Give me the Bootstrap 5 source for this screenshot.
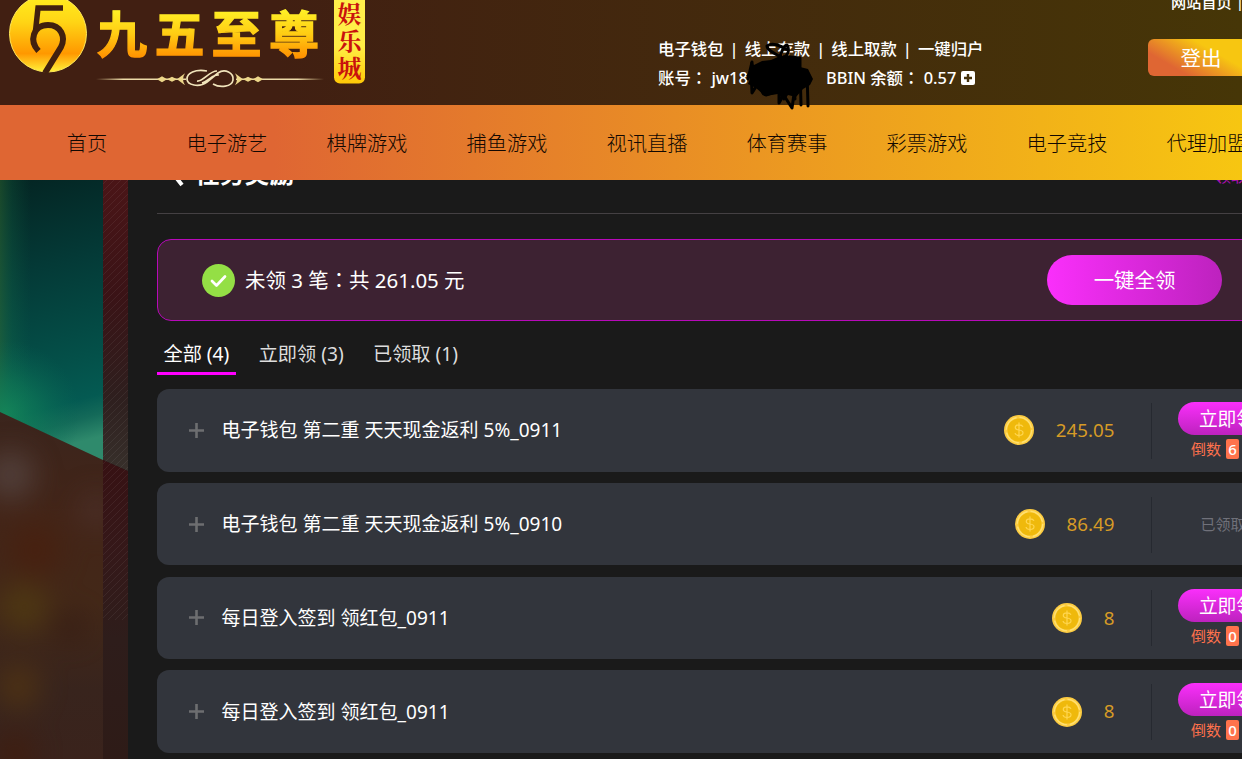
<!DOCTYPE html>
<html lang="zh-CN">
<head>
<meta charset="utf-8">
<meta name="viewport" content="width=device-width, initial-scale=1">
<title>九五至尊娱乐城</title>
<link rel="stylesheet" href="https://cdn.jsdelivr.net/npm/bootstrap@5.3.0/dist/css/bootstrap.min.css">
<style>
html,body{height:100%;overflow:hidden}
body{background:#1a1a1a;color:#fff;font-family:"Noto Sans","Noto Sans CJK SC",sans-serif;font-size:18.75px;line-height:1.4}
svg{display:block}
.colon{font-family:"Noto Sans CJK TC",sans-serif;line-height:1}
.site-head{height:105px;background:linear-gradient(90deg,#411f12 22%,#463607 100%)}
.brand{width:372px;height:105px}
.account{margin-left:286px;padding-top:35px;font-size:16.4px;width:420px;font-weight:500;white-space:nowrap}
.account>div{height:29px;line-height:27px}
.account .links{word-spacing:-1.25px}
.tools{width:164px;padding-left:93px;white-space:nowrap}
.home-links{font-size:15.2px;height:39px;line-height:20px;font-weight:500;word-spacing:-2px}
.home-links span{position:relative;top:-8px}
.logout{width:106px;height:37px;margin-left:-23px;border-radius:6px;background:linear-gradient(30deg,#df6633 24%,#f7c611 64%);font-size:20.5px;line-height:38px;text-align:center}
.scribble{left:744px;top:40px;z-index:3}
.main-nav{height:75px;padding-left:17px;z-index:2;background:linear-gradient(90deg,#df6633 22%,#f7c611 100%)}
.main-nav .nav-link{width:140px;flex:none;padding:0;text-align:center;color:#120802;font-size:20.2px;line-height:76px;font-weight:300;white-space:nowrap}
.backdrop{width:128px;flex:none}
.panel{width:1150px;flex:none;padding-left:29px;margin-top:-27px}
.panel-head{width:1120px;height:61px;border-bottom:1px solid #444043;font-size:24.8px;font-weight:700;line-height:41px}
.panel-head svg{margin:4px 10px 0 12px}
.rules{margin-left:auto;width:62px;font-size:16px;font-weight:400;color:#b00fb4;white-space:nowrap;line-height:46px}
.summary{width:1120px;height:82px;margin-top:25px;padding-left:44px;border:1px solid #b709b9;border-radius:14px;background:#3d2232;font-size:20.45px}
.claim-all{width:175px;height:50px;margin-left:auto;margin-right:54px;border-radius:25px;background:linear-gradient(90deg,#fa2ffb,#bd22be);line-height:51px;text-align:center}
.tabs{height:54px;gap:16.3px;color:#ddd;font-size:19.2px}
.tabs>div{height:54px;padding:0 6.5px;line-height:66px;white-space:nowrap}
.tabs .current{color:#fff;border-bottom:3px solid #f0f}
.tasks{gap:11.25px;margin-top:14px}
.task{width:1120px;height:82.5px;border-radius:12px;background:#32353c;flex:none}
.task .plus{margin-left:32px;margin-right:17.5px}
.task .title{width:510px;white-space:nowrap;font-size:19.03px;padding-top:1px}
.amount{width:383px;color:#d69b26;gap:21.5px}
.act{width:130px;height:56px;margin-left:36.5px;border-left:1px solid #262930;padding-left:26px;margin-top:1px}
.claim{width:98px;height:33px;border-radius:17px;background:linear-gradient(#fa2ffb,#bd22be);line-height:33px;text-align:center;margin-top:-1px}
.count{height:20px;margin-top:4px;padding-left:13px;color:#ff714c;font-size:15px;line-height:20px}
.count b{width:13px;height:20px;margin-left:5px;border-radius:2px;background:#ff734c;color:#fff;text-align:center;font-weight:500}
.done{font-size:15px;color:#70717a;line-height:55px;padding-left:22.5px}
</style>
</head>
<body>
<div class="d-flex flex-column vh-100 overflow-hidden">
<header class="site-head d-flex flex-shrink-0 position-relative">
  <svg class="brand flex-shrink-0" viewBox="0 0 372 105">
    <defs>
      <linearGradient id="gold" x1="0" y1="0" x2="0" y2="1"><stop offset="0" stop-color="#ffee20"/><stop offset=".35" stop-color="#ffd515"/><stop offset=".76" stop-color="#ff9800"/><stop offset="1" stop-color="#fff23a"/></linearGradient>
      <linearGradient id="word" gradientUnits="userSpaceOnUse" x1="0" y1="10" x2="0" y2="58"><stop offset="0" stop-color="#fff026"/><stop offset=".5" stop-color="#ffcc13"/><stop offset="1" stop-color="#ff9000"/></linearGradient>
      <linearGradient id="rule"><stop offset="0" stop-color="#e8d39a" stop-opacity="0"/><stop offset=".3" stop-color="#ecdba8"/><stop offset="1" stop-color="#ecdba8"/></linearGradient>
      <linearGradient id="ruleR" x1="1" x2="0"><stop offset="0" stop-color="#e8d39a" stop-opacity="0"/><stop offset=".3" stop-color="#ecdba8"/><stop offset="1" stop-color="#ecdba8"/></linearGradient>
      <linearGradient id="tag" x1="0" y1="0" x2="0" y2="1"><stop offset="0" stop-color="#fff04e"/><stop offset=".6" stop-color="#ffed45"/><stop offset="1" stop-color="#ffc907"/></linearGradient>
    </defs>
    <circle cx="48" cy="33.500" r="38.500" fill="url(#gold)" stroke="#ffe95a"/>
    <path d="M63 8H38L35.500 31" fill="none" stroke="#41200f" stroke-width="5.500"/>
    <path d="M38.500 51C29 41 33 25 48 25C61 25 66 37 61 47L45 73" fill="none" stroke="#41200f" stroke-width="6"/>
    <text y="53" font-family="'Noto Sans CJK SC',sans-serif" font-weight="700" font-size="50" fill="url(#word)" stroke="url(#word)" stroke-width="1.300"><tspan x="97">九</tspan><tspan x="154.500">五</tspan><tspan x="211.500">至</tspan><tspan x="269">尊</tspan></text>
    <rect x="334" y="-10" width="31" height="93.500" rx="6" fill="url(#tag)"/>
    <g font-family="'Noto Serif CJK SC','Noto Sans CJK SC',sans-serif" font-weight="700" font-size="24" fill="#c9120d"><text x="337.500" y="22.500">娱</text><text x="337.500" y="49.500">乐</text><text x="337.500" y="77">城</text></g>
    <path d="M96 78.500H186V80H96Z" fill="url(#rule)"/><path d="M236 78.500H324V80H236Z" fill="url(#ruleR)"/>
    <path d="M157 79.300l5-3 5 3-5 3zM167 79.300l5-2.500 5 2.500-5 2.500zM177 79.300l8-6q-4 6 0 12zM263 79.300l-5-3-5 3 5 3zM253 79.300l-5-2.500-5 2.500 5 2.500zM243 79.300l-8-6q4 6 0 12z" fill="#edd78a"/>
    <g fill="none" stroke="#f1e4bb" stroke-width="1.700"><path d="M207 71C195 69 187 73 187 79S199 88 207 82L218 73C225 68 234 73 233 80S220 88 213 84M197 81C203 82 209 71 217 71M202 83C210 80 213 74 219 75"/></g>
  </svg>
  <div class="account flex-shrink-0">
    <div class="links">电子钱包&nbsp; |&nbsp; 线上存款&nbsp; |&nbsp; 线上取款&nbsp; |&nbsp; 一键归户</div>
    <div class="d-flex align-items-center" style="margin-top:-1px"><span style="width:168px">账号<span class="colon" lang="zh-TW">：</span> jw18</span><span>BBIN 余额<span class="colon" lang="zh-TW">：</span> 0.57</span>
      <svg style="margin-left:5px" width="14" height="14"><rect width="14" height="14" rx="2" fill="#fff"/><path d="M7 3v8M3 7h8" stroke="#463109" stroke-width="2.400"/></svg>
    </div>
  </div>
  <div class="tools">
    <div class="home-links"><span>网站首页 &nbsp;|</span></div>
    <div class="logout">登出</div>
  </div>
  <svg class="scribble position-absolute" width="74" height="72" viewBox="744 40 74 72">
    <path d="M750 62L754 65L762 61L771 60L780 56L786 55L795 56L801 57L800 67L808 69L813 79L810 85L803 89L796 97L788 95L784 101L778 94L765 96L756 88L748 84L751 76L746 76L752 69Z"/>
    <path d="M781 57C775 54 767 50 767 46C773 42 780 46 788 50M780 57C781 54 783 45 787 45C790 50 788 56 783 58M748 79l4-17 1 14M751 70l1 23 7-11M761 86q1 9 5 9l9-3M779 82v21l8-14M783 94l9 14 2-14 0 5M794 86l1 13M796 68l4 0 1 37M807 72l1 34M793 58l7 0 0 12" fill="none" stroke="#000" stroke-width="3" stroke-linecap="round" stroke-linejoin="round"/>
  </svg>
</header>
<nav class="main-nav nav flex-nowrap flex-shrink-0 position-relative overflow-hidden">
  <a class="nav-link">首页</a><a class="nav-link">电子游艺</a><a class="nav-link">棋牌游戏</a><a class="nav-link">捕鱼游戏</a><a class="nav-link">视讯直播</a><a class="nav-link">体育赛事</a><a class="nav-link">彩票游戏</a><a class="nav-link">电子竞技</a><a class="nav-link">代理加盟</a>
</nav>
<main class="d-flex flex-nowrap" style="height:579px">
  <div class="backdrop">
    <svg width="128" height="579" viewBox="0 180 128 579">
      <defs>
        <linearGradient id="teal" x1="0" y1="0" x2=".1" y2="1"><stop offset="0" stop-color="#042422"/><stop offset=".35" stop-color="#043a37"/><stop offset=".7" stop-color="#045049"/><stop offset=".85" stop-color="#045a52"/><stop offset=".92" stop-color="#146a59"/><stop offset="1" stop-color="#2f8a6c"/></linearGradient>
        <linearGradient id="glow"><stop offset="0" stop-color="#3a7a35"/><stop offset=".12" stop-color="#1c7a4a" stop-opacity=".5"/><stop offset=".3" stop-color="#147048" stop-opacity="0"/></linearGradient>
        <radialGradient id="corner" gradientUnits="userSpaceOnUse" cx="5" cy="415" r="75"><stop offset="0" stop-color="#15885a" stop-opacity=".9"/><stop offset=".45" stop-color="#118058" stop-opacity=".5"/><stop offset="1" stop-color="#0a6a54" stop-opacity="0"/></radialGradient>
        <linearGradient id="edge" x1="0" y1="0" x2="0" y2="1"><stop offset="0" stop-color="#4a1517"/><stop offset=".4" stop-color="#3a1316"/><stop offset=".75" stop-color="#2e1f1e"/><stop offset="1" stop-color="#37302b"/></linearGradient>
        <linearGradient id="edgeLow" x1="0" y1="0" x2="0" y2="1"><stop offset="0" stop-color="#371113"/><stop offset=".3" stop-color="#351819"/><stop offset=".6" stop-color="#2e1d1b"/><stop offset="1" stop-color="#2e1b17"/></linearGradient>
        <linearGradient id="wood" x1="0" y1="0" x2="0" y2="1"><stop offset="0" stop-color="#3b251d"/><stop offset=".3" stop-color="#432518"/><stop offset=".55" stop-color="#432818"/><stop offset=".8" stop-color="#38241d"/><stop offset="1" stop-color="#3a231c"/></linearGradient>
        <pattern id="hatch" width="7" height="7" patternUnits="userSpaceOnUse"><path d="M-1 8L8-1M-1 1L1-1M6 8L8 6" stroke="#fff" stroke-opacity=".06"/></pattern>
        <filter id="soft" filterUnits="userSpaceOnUse" x="-60" y="380" width="240" height="440" color-interpolation-filters="sRGB"><feGaussianBlur stdDeviation="14"/></filter>
        <clipPath id="photo"><path d="M0 412L103 460V759H0Z"/></clipPath>
      </defs>
      <rect y="180" width="103" height="281" fill="url(#teal)"/>
      <rect y="180" width="103" height="281" fill="url(#glow)" opacity=".4"/>
      <rect y="180" width="103" height="281" fill="url(#corner)"/>
      <g clip-path="url(#photo)">
        <rect y="412" width="103" height="347" fill="url(#wood)"/>
        <g filter="url(#soft)" opacity=".85"><circle cx="10" cy="475" r="25" fill="#54433f"/><circle cx="35" cy="550" r="26" fill="#48200f"/><circle cx="24" cy="607" r="24" fill="#503a12"/><circle cx="70" cy="627" r="14" fill="#351b12"/><circle cx="18" cy="687" r="22" fill="#513413"/><circle cx="96" cy="510" r="18" fill="#4b302a"/><circle cx="15" cy="753" r="20" fill="#401d0e"/></g>
      </g>
      <path d="M103 180H128V471L103 460Z" fill="url(#edge)"/><path d="M103 460L128 471V759H103Z" fill="url(#edgeLow)"/>
      <rect x="103" y="180" width="25" height="440" fill="url(#hatch)"/>
    </svg>
  </div>
  <section class="panel">
    <div class="panel-head d-flex align-items-start">
      <svg width="16" height="32" viewBox="0 0 16 32"><path d="M12 7L4 16.500L13 28" fill="none" stroke="#fff" stroke-width="4"/></svg><span>任务奖励</span><span class="rules">领取记录</span>
    </div>
    <div class="summary d-flex align-items-center">
      <svg width="33" height="33" style="margin-right:10px"><circle cx="16.500" cy="16.500" r="16.500" fill="#94df45"/><path d="M10 17l4.500 4.500L23 12.500" fill="none" stroke="#fff" stroke-width="2.700" stroke-linecap="round" stroke-linejoin="round"/></svg>
      <span>未领 3 笔<span class="colon" lang="zh-TW">：</span>共 261.05 元</span>
      <div class="claim-all">一键全领</div>
    </div>
    <div class="tabs d-flex"><div class="current">全部 (4)</div><div>立即领 (3)</div><div>已领取 (1)</div></div>
    <div class="tasks d-flex flex-column" id="tasks"></div>
  </section>
</main>
</div>
<script src="https://cdn.jsdelivr.net/npm/bootstrap@5.3.0/dist/js/bootstrap.bundle.min.js"></script>
<script>
const tasks=[
  ['电子钱包 第二重 天天现金返利 5%_0911','245.05','6'],
  ['电子钱包 第二重 天天现金返利 5%_0910','86.49',null],
  ['每日登入签到 领红包_0911','8','0'],
  ['每日登入签到 领红包_0911','8','0']
];
document.getElementById('tasks').innerHTML=tasks.map(([title,sum,left])=>`
<div class="task d-flex align-items-center">
  <svg class="plus flex-shrink-0" width="15" height="15"><path d="M7.500 0v15M0 7.500h15" stroke="#6d6e70" stroke-width="2.600"/></svg>
  <span class="title flex-shrink-0">${title}</span>
  <div class="amount d-flex flex-shrink-0 align-items-center justify-content-end">
    <svg width="30" height="30" viewBox="0 0 30 30"><circle cx="15" cy="15" r="15" fill="#fccb40"/><circle cx="15" cy="15" r="12.700" fill="none" stroke="#ffe06f" stroke-width="1.500" stroke-dasharray="17 3"/><circle cx="15" cy="15" r="11.500" fill="#efb90c"/><path d="M19 11.800Q18 9.800 15 9.800Q11.300 9.800 11.300 12.400Q11.300 14.500 15 15Q19 15.500 19 17.800Q19 20.500 15 20.500Q11.500 20.500 11 18M15 7.500v15" fill="none" stroke="#ffd650" stroke-width="1.200"/></svg>
    <span>${sum}</span>
  </div>
  <div class="act flex-shrink-0">${left===null?'<div class="done">已领取</div>':`<div class="claim">立即领</div><div class="count d-flex">倒数<b>${left}</b></div>`}</div>
</div>`).join('');
</script>
</body>
</html>
